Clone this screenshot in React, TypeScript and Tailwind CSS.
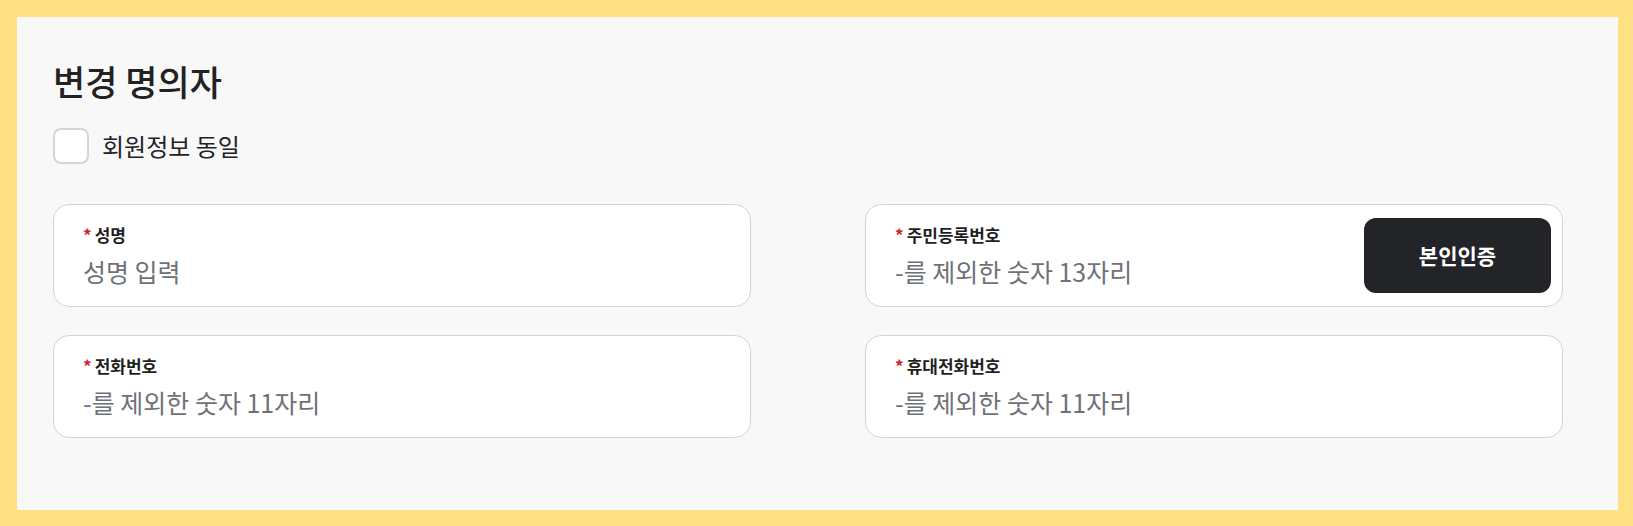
import { useState } from "react";

type Field = {
  id: string;
  label: string;
  placeholder: string;
  action?: string;
};

const fields: Field[] = [
  { id: "name", label: "성명", placeholder: "성명 입력" },
  {
    id: "rrn",
    label: "주민등록번호",
    placeholder: "-를 제외한 숫자 13자리",
    action: "본인인증",
  },
  { id: "tel", label: "전화번호", placeholder: "-를 제외한 숫자 11자리" },
  { id: "mobile", label: "휴대전화번호", placeholder: "-를 제외한 숫자 11자리" },
];

function FieldCard({ field }: { field: Field }) {
  return (
    <div className="flex items-center h-[103px] rounded-2xl border-[1.5px] border-[#d3d4d9] bg-white pl-[29px] pr-[11px]">
      <div className="flex flex-col flex-1 min-w-0">
        <label
          htmlFor={field.id}
          className="flex items-center h-5 text-[17px] font-bold text-[#1f1f1f] leading-5"
        >
          <span className="text-[#d4202c] mr-[3px]">*</span>
          {field.label}
        </label>
        <input
          id={field.id}
          placeholder={field.placeholder}
          className="mt-[10px] h-[32px] w-full bg-transparent text-[25px] leading-[32px] text-[#222] placeholder:text-[#6f7177] outline-none"
        />
      </div>
      {field.action && (
        <button
          type="button"
          className="w-[187px] h-[75px] rounded-xl bg-[#232428] text-white text-[21px] font-bold shrink-0"
        >
          {field.action}
        </button>
      )}
    </div>
  );
}

export default function App() {
  const [same, setSame] = useState(false);

  return (
    <div
      className="w-[1633px] h-[526px] bg-[#ffe083] p-[17px] pb-[16px] pr-[15px]"
      style={{ fontFamily: '"Noto Sans CJK KR", "Noto Sans", sans-serif' }}
    >
      <div className="h-full bg-[#f8f8f9] pl-9 pr-[55px] pt-[42px]">
        <h2 className="text-[35px] leading-[44px] font-medium text-[#222]">
          변경 명의자
        </h2>

        <label className="mt-[25px] flex items-center gap-[13px] w-fit cursor-pointer">
          <input
            type="checkbox"
            checked={same}
            onChange={(e) => setSame(e.target.checked)}
            className="appearance-none w-9 h-9 rounded-lg border-2 border-[#d3d5da] bg-white checked:bg-[#232428] checked:border-[#232428]"
          />
          <span className="text-[24px] leading-[32px] text-[#222]">
            회원정보 동일
          </span>
        </label>

        <div className="mt-10 grid grid-cols-2 gap-x-[114px] gap-y-[28px]">
          {fields.map((f) => (
            <FieldCard key={f.id} field={f} />
          ))}
        </div>
      </div>
    </div>
  );
}
